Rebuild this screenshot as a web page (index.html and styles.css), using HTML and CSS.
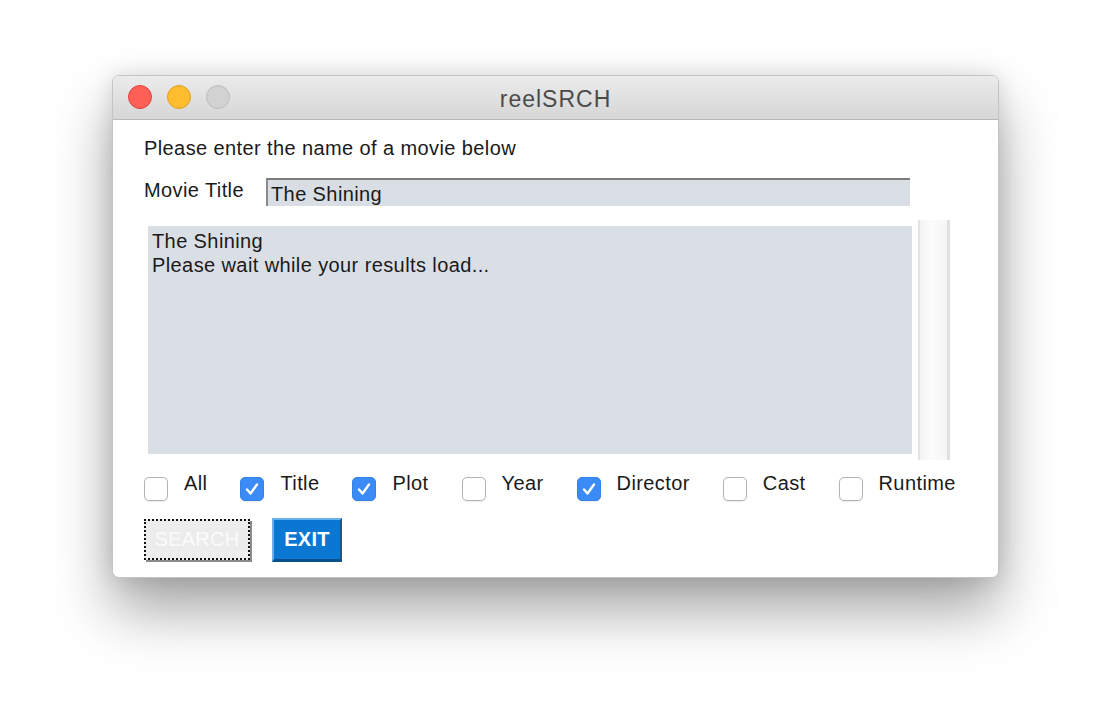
FILE: index.html
```html
<!DOCTYPE html>
<html lang="en">
<head>
<meta charset="utf-8">
<title>reelSRCH</title>
<link rel="stylesheet" href="styles.css">
</head>
<body>
<div class="window">
  <div class="titlebar">
    <div class="lights">
      <span class="light red"></span>
      <span class="light yellow"></span>
      <span class="light grey"></span>
    </div>
    <div class="title">reelSRCH</div>
    <div class="spacer"></div>
  </div>
  <div class="content">
    <div class="intro">Please enter the name of a movie below</div>
    <div class="field-row">
      <label class="field-label">Movie Title</label>
      <div class="field">The Shining</div>
    </div>
    <div class="pane">
      <div class="area-wrap">
        <div class="area">The Shining<br>Please wait while your results load...</div>
      </div>
      <div class="scrollbar"></div>
    </div>
    <div class="checks">
      <div class="check"><span class="box"></span><span class="lbl">All</span></div>
      <div class="check"><span class="box on"><svg viewBox="0 0 24 24" width="24" height="24"><path d="M7 12.5l3.5 4 6.5-9" fill="none" stroke="#fff" stroke-width="2.4" stroke-linecap="round" stroke-linejoin="round"/></svg></span><span class="lbl">Title</span></div>
      <div class="check"><span class="box on"><svg viewBox="0 0 24 24" width="24" height="24"><path d="M7 12.5l3.5 4 6.5-9" fill="none" stroke="#fff" stroke-width="2.4" stroke-linecap="round" stroke-linejoin="round"/></svg></span><span class="lbl">Plot</span></div>
      <div class="check"><span class="box"></span><span class="lbl">Year</span></div>
      <div class="check"><span class="box on"><svg viewBox="0 0 24 24" width="24" height="24"><path d="M7 12.5l3.5 4 6.5-9" fill="none" stroke="#fff" stroke-width="2.4" stroke-linecap="round" stroke-linejoin="round"/></svg></span><span class="lbl">Director</span></div>
      <div class="check"><span class="box"></span><span class="lbl">Cast</span></div>
      <div class="check"><span class="box"></span><span class="lbl">Runtime</span></div>
    </div>
    <div class="buttons">
      <button class="btn search">SEARCH</button>
      <button class="btn exit">EXIT</button>
    </div>
  </div>
</div>
</body>
</html>
```
FILE: styles.css
```css
html, body {
  margin: 0;
  padding: 0;
  background: #ffffff;
}
body {
  padding: 75px 0 0 112px;
  font-family: "Liberation Sans", Arial, sans-serif;
  color: #1a1a1a;
  height: 726px;
  box-sizing: border-box;
  overflow: hidden;
}
.window {
  width: 887px;
  height: 503px;
  box-sizing: border-box;
  border-radius: 7px;
  background: #ffffff;
  border: 1px solid #c4c4c4;
  box-shadow: 0 32px 58px rgba(0,0,0,0.36), 0 0 22px rgba(0,0,0,0.12);
  overflow: hidden;
}
.titlebar {
  height: 44px;
  box-sizing: border-box;
  border-bottom: 1px solid #b8b8b8;
  background: linear-gradient(#ebebeb, #d6d6d6);
  display: grid;
  grid-template-columns: 1fr auto 1fr;
  align-items: center;
}
.lights {
  display: flex;
  gap: 15px;
  padding-left: 15px;
  margin-top: -2px;
}
.light {
  width: 24px;
  height: 24px;
  border-radius: 50%;
  box-sizing: border-box;
}
.red { background: #fe5f57; border: 1px solid #e0443e; }
.yellow { background: #febc2e; border: 1px solid #dea123; }
.grey { background: #d2d2d2; border: 1px solid #bdbdbd; }
.title {
  font-size: 23px;
  letter-spacing: 1px;
  color: #4b4b4b;
  margin-top: 3px;
}
.content {
  padding: 16px 0 0 31px;
  font-size: 20px;
  line-height: 24px;
  letter-spacing: 0.4px;
}
.intro {
  height: 24px;
}
.field-row {
  display: flex;
  align-items: flex-start;
  margin-top: 18px;
}
.field-label {
  width: 122px;
  flex: none;
}
.field {
  width: 644px;
  height: 28px;
  box-sizing: border-box;
  background: #d9dde4;
  border-top: 2px solid #7b7b7b;
  border-left: 2px solid #8a8a8a;
  padding: 2px 0 0 3px;
  line-height: 24px;
}
.pane {
  display: flex;
  margin-top: 14px;
  margin-left: -2px;
  width: 808px;
  height: 240px;
}
.area-wrap {
  flex: 1;
  padding: 6px;
}
.area {
  height: 100%;
  background: #dadee5;
  padding: 3px 4px;
  box-sizing: border-box;
}
.scrollbar {
  width: 32px;
  box-sizing: border-box;
  border-left: 2px solid #e3e3e5;
  border-right: 3px solid #e0e0e2;
  background: linear-gradient(90deg, #f3f3f4, #fbfbfb 40%, #f6f6f7);
}
.checks {
  display: flex;
  gap: 33px;
  margin-top: 11px;
  align-items: flex-start;
}
.check {
  display: flex;
  align-items: flex-start;
  gap: 16px;
}
.box {
  width: 24px;
  height: 24px;
  margin-top: 6px;
  box-sizing: border-box;
  border: 1px solid #b4b4b4;
  border-radius: 5px;
  background: #ffffff;
  box-shadow: 0 0.5px 1px rgba(0,0,0,0.08);
  display: block;
}
.box svg { display: block; margin: -1px; }
.box.on {
  background: #3b8bf6;
  border-color: #3482ea;
}
.buttons {
  display: flex;
  gap: 22px;
  margin-top: 17px;
}
.btn {
  font-family: "Liberation Sans", Arial, sans-serif;
  font-size: 20px;
  height: 44px;
  box-sizing: border-box;
  padding: 0;
  cursor: default;
  letter-spacing: 0.3px;
}
.search {
  width: 106px;
  background: #ececec;
  color: #fbfbfb;
  border: 2px dotted #111;
  box-shadow: 2px 2px 0 #8a8a8a;
  height: 41px;
  margin-top: 1px;
}
.exit {
  width: 70px;
  background: #0a78d2;
  color: #ffffff;
  font-weight: bold;
  border-top: 2px solid #6bb0ee;
  border-left: 2px solid #6bb0ee;
  border-right: 2px solid #0b5aa0;
  border-bottom: 3px solid #0a4f8e;
}
```
